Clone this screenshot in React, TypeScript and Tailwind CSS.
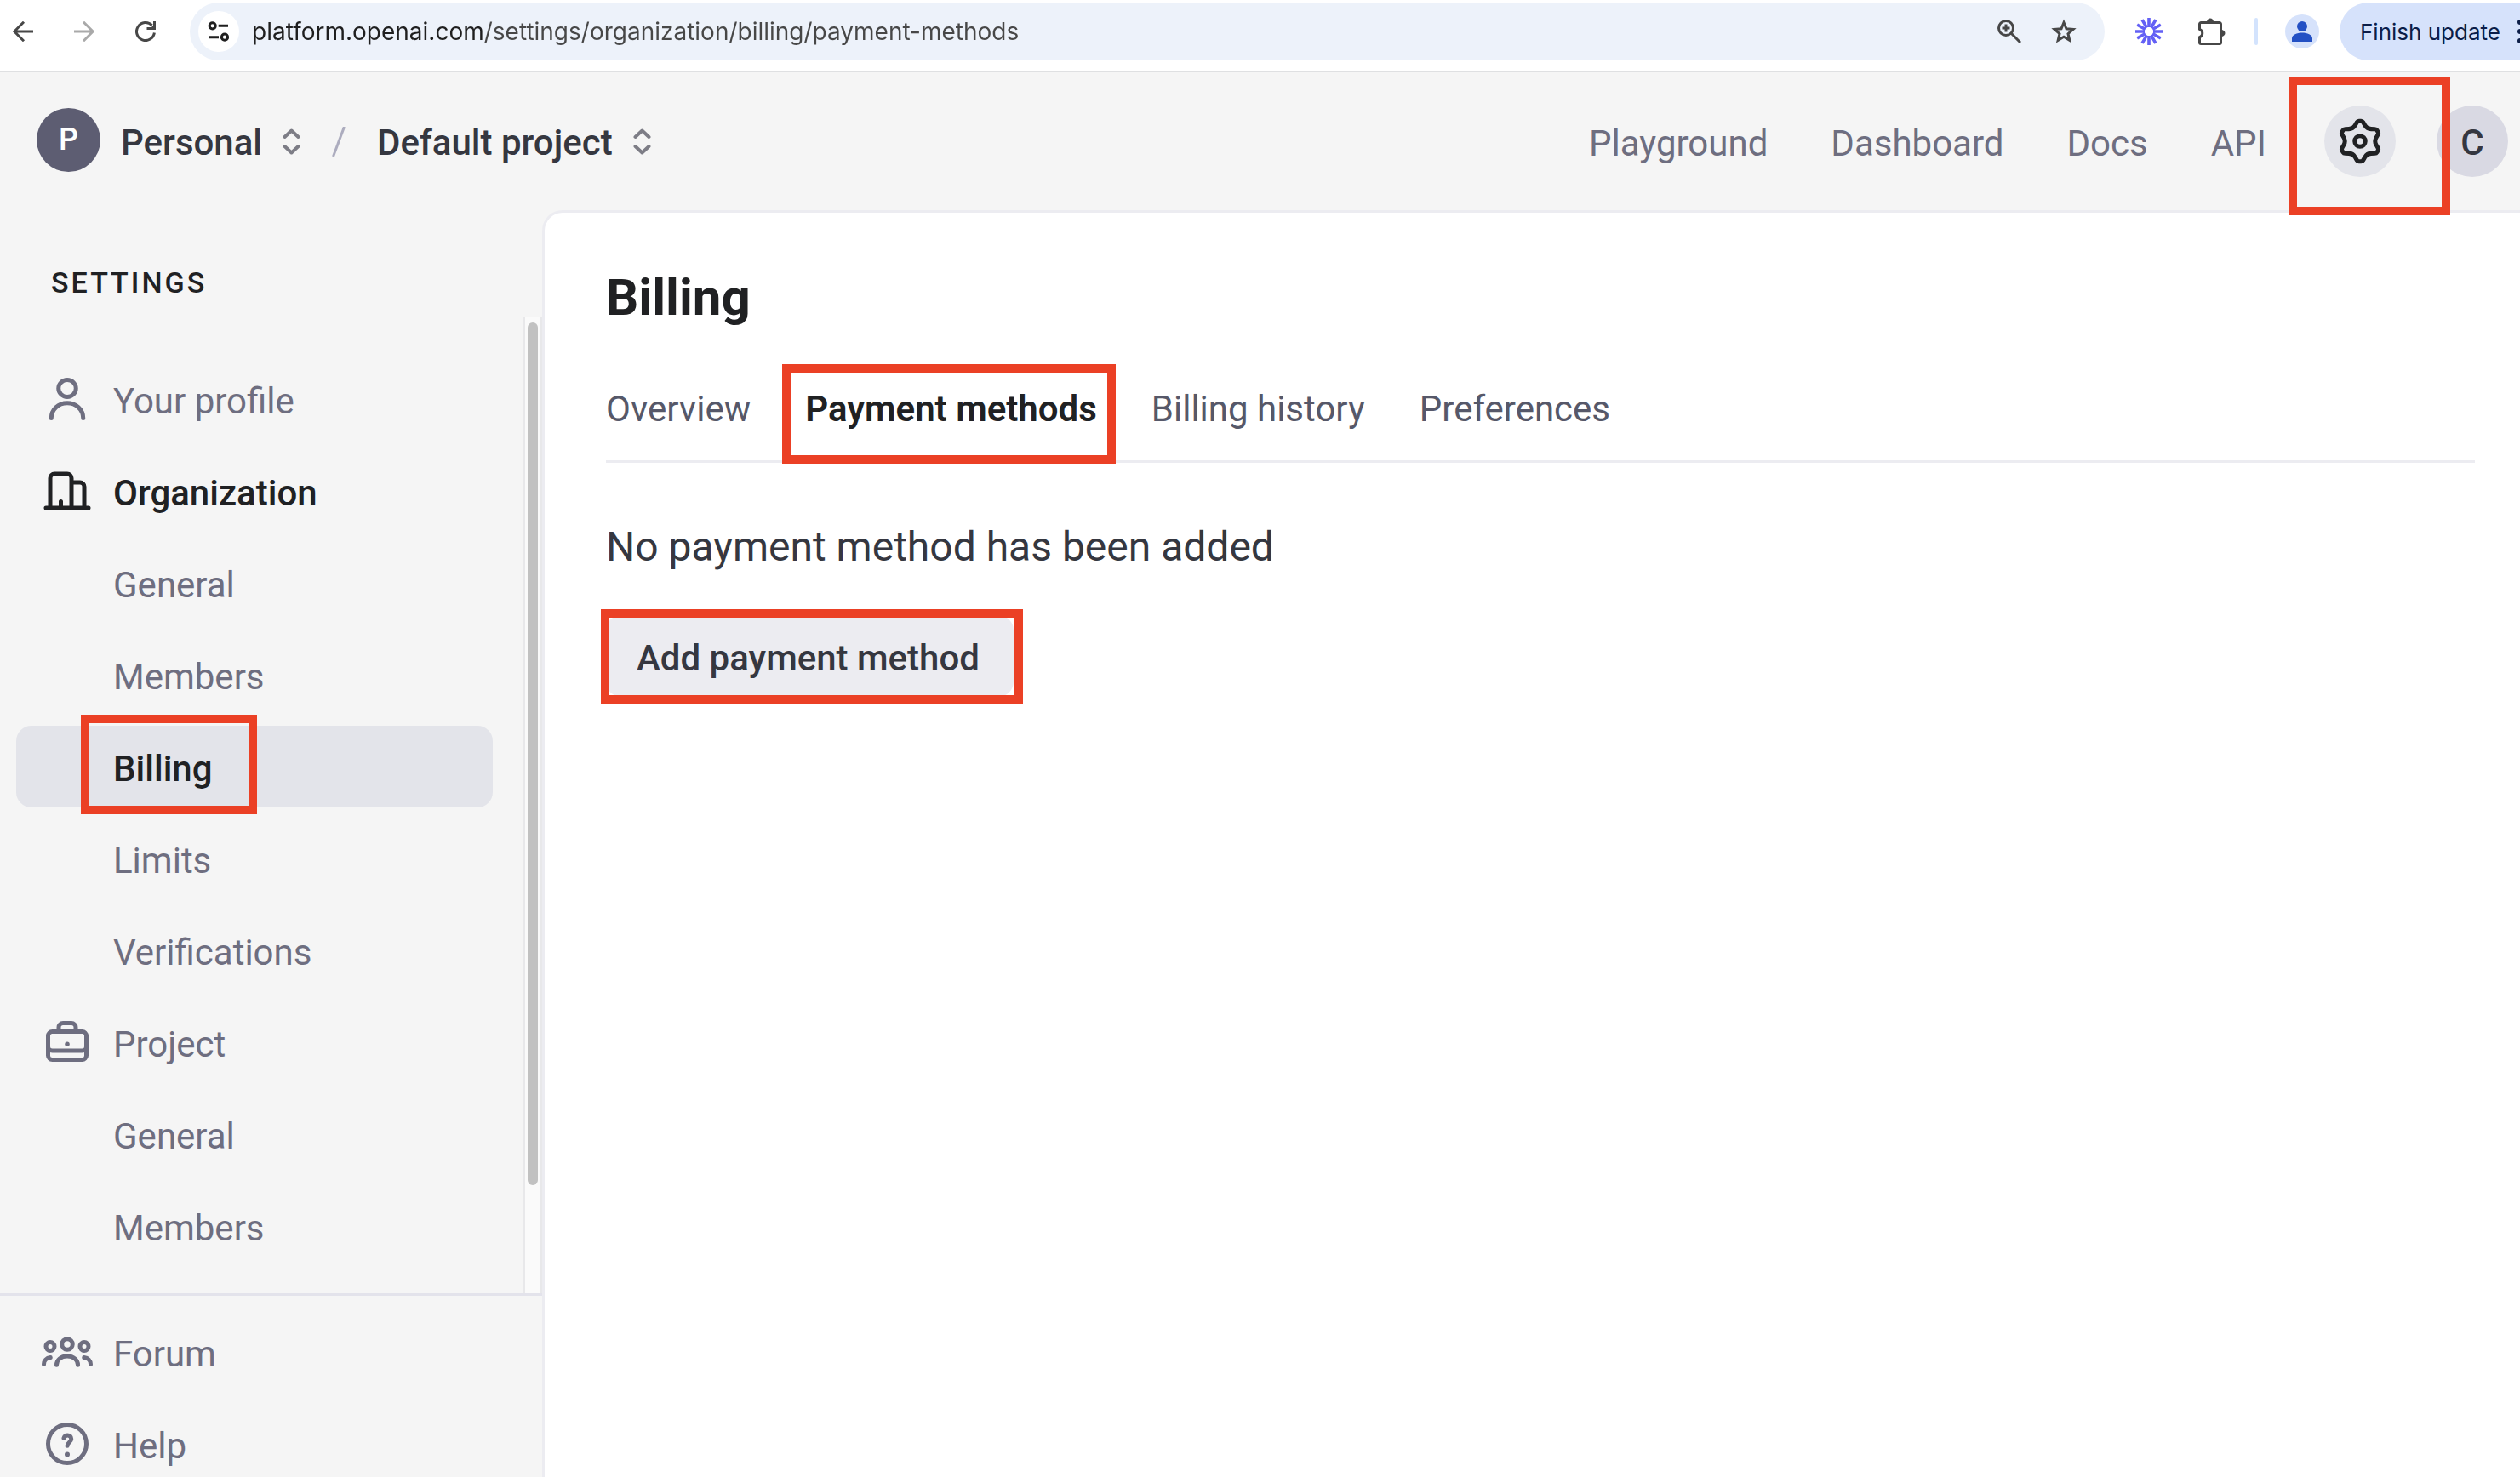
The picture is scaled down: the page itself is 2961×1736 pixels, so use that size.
import type { ReactNode } from 'react';

const RED_BOX = 'pointer-events-none absolute z-10 border-10 border-[#eb4025]';

function BackArrow({ flip = false }: { flip?: boolean }) {
  return (
    <svg viewBox="0 0 24 24" className={flip ? 'size-6 rotate-180' : 'size-6'} fill="none" stroke="currentColor" strokeWidth="3" aria-hidden="true">
      <path d="M24 12H2M13 .8 1.8 12 13 23.2" />
    </svg>
  );
}

function Reload() {
  return (
    <svg viewBox="0 0 24 24" className="size-6" fill="none" stroke="currentColor" strokeWidth="3" aria-hidden="true">
      <path d="M22.4 13.5A10.5 10.5 0 1 1 19.6 4.8" />
      <path d="M22.5 0v8.5h-9" />
      <path d="M23 3v6h-6z" fill="currentColor" stroke="none" />
    </svg>
  );
}

function Tune() {
  return (
    <svg viewBox="0 0 48 48" className="size-12" fill="none" stroke="currentColor" strokeWidth="3" aria-hidden="true">
      <circle cx="16.7" cy="17.3" r="3.6" />
      <path d="M23.7 17.3H35M13 30.7h11" />
      <circle cx="31" cy="30.7" r="3.6" />
    </svg>
  );
}

function Magnifier() {
  return (
    <svg viewBox="0 0 28 28" className="size-7" fill="none" stroke="currentColor" strokeWidth="3" aria-hidden="true">
      <circle cx="10" cy="10" r="8.5" />
      <path d="M16 16l11 11M10 5.5v9M5.5 10h9" />
    </svg>
  );
}

function Star() {
  return (
    <svg viewBox="0 0 30 30" className="size-[30px]" fill="none" stroke="currentColor" strokeWidth="3" strokeMiterlimit="10" aria-hidden="true">
      <path d="M15 4.5l3 7.3 8 .7-6 5.2 1.8 7.6-6.8-4.1-6.8 4.1L10 17.7l-6-5.2 8-.7z" />
    </svg>
  );
}

function Burst() {
  return (
    <svg viewBox="0 0 32 32" className="size-8" stroke="#6360f5" strokeWidth="3.6" aria-hidden="true">
      <path d="M16 0v11M16 21v11M0 16h11M21 16h11M8 2.14l5.5 9.53M18.5 20.33l5.5 9.53M2.14 8l9.53 5.5M20.33 18.5l9.53 5.5M24 2.14l-5.5 9.53M13.5 20.33L8 29.86M29.86 8l-9.53 5.5M11.67 18.5L2.14 24" />
    </svg>
  );
}

function Puzzle() {
  return (
    <svg viewBox="0 0 32 32" className="size-8" fill="none" stroke="currentColor" strokeWidth="3" aria-hidden="true">
      <path d="M3.3 5.5h21.4a1.8 1.8 0 0 1 1.8 1.8v21.4a1.8 1.8 0 0 1-1.8 1.8H3.3a1.8 1.8 0 0 1-1.8-1.8v-6a5 5 0 0 0 0-9.4v-6a1.8 1.8 0 0 1 1.8-1.8z" />
      <path d="M10 5a4 4.5 0 0 1 8 0zM27 14a4.5 4 0 0 1 0 8z" fill="currentColor" stroke="none" />
    </svg>
  );
}

function Updown() {
  return (
    <svg viewBox="0 0 21 31" className="h-[31px] w-[21px]" fill="none" stroke="#7d7d86" strokeWidth="4" strokeLinecap="round" strokeLinejoin="round" aria-hidden="true">
      <path d="M2.5 10l8-7.5 8 7.5M2.5 21l8 7.5 8-7.5" />
    </svg>
  );
}

function Icon({ children }: { children: ReactNode }) {
  return (
    <svg viewBox="0 0 24 24" className="size-15 shrink-0" fill="none" stroke="currentColor" strokeWidth="2" strokeLinecap="round" strokeLinejoin="round" aria-hidden="true">
      {children}
    </svg>
  );
}

const personIcon = (
  <Icon>
    <ellipse cx="12" cy="7" rx="4.1" ry="4" />
    <path d="M4.5 21C4.5 17 7.8 13.9 12 13.9S19.5 17 19.5 21" />
  </Icon>
);

const buildingIcon = (
  <Icon>
    <path d="M2 20h20M4 20V6a2 2 0 0 1 2-2h6a2 2 0 0 1 2 2v14M14 8h4a2 2 0 0 1 2 2v10M9 17v3" />
  </Icon>
);

const briefcaseIcon = (
  <Icon>
    <path d="M8 7V5a2 2 0 0 1 2-2h4a2 2 0 0 1 2 2v2" />
    <rect x="3" y="7" width="18" height="13.2" rx="2" />
    <path d="M3 14a2 2 0 0 0 2 2h14a2 2 0 0 0 2-2" />
    <circle cx="12" cy="12.9" r="1.1" fill="currentColor" stroke="none" />
  </Icon>
);

const forumIcon = (
  <Icon>
    <circle cx="12" cy="8.4" r="2.5" />
    <circle cx="4" cy="9.4" r="2" />
    <circle cx="20" cy="9.4" r="2" />
    <path d="M7 18.1c0-2.4 2.1-4.1 5-4.1s5 1.7 5 4.1M1 17.8c0-1.6 1.2-3 3.1-3.2M23 17.8c0-1.6-1.2-3-3.1-3.2" />
  </Icon>
);

const helpIcon = (
  <Icon>
    <circle cx="12" cy="12" r="9" />
    <path d="M10.4 9.3C10.7 8.4 11.3 8 12.1 8c1 0 1.8.7 1.8 1.7 0 1.5-1.9 1.7-1.9 3.2" />
    <circle cx="12" cy="17" r="1.2" fill="currentColor" stroke="none" />
  </Icon>
);

function NavRow({ label, icon, tone = 'muted', boxed = false }: { label: string; icon?: ReactNode; tone?: 'muted' | 'strong' | 'selected'; boxed?: boolean }) {
  const tones = {
    muted: 'text-[#6e6e80]',
    strong: 'font-medium text-[#202123]',
    selected: 'font-medium text-[#202123] bg-[#e3e4ea]',
  };
  return (
    <li className="relative">
      <a href="#" aria-current={tone === 'selected' ? 'page' : undefined} className={`flex h-24 items-center gap-6 rounded-[18px] pl-[30px] text-[42px] leading-[56px] ${tones[tone]}`}>
        {icon ?? <span className="size-15 shrink-0" />}
        <span className="pt-1.5">{label}</span>
      </a>
      {boxed && <span className={`${RED_BOX} -top-[13px] left-[76px] h-[117px] w-[207px]`} />}
    </li>
  );
}

function BrowserBar() {
  return (
    <div className="flex items-center border-b-2 border-[#dfe0e2] bg-white pt-[3px] pb-3 pl-[15px] font-[Inter,sans-serif] text-[#474747]">
      <button type="button" aria-label="Back"><BackArrow /></button>
      <button type="button" aria-label="Forward" className="ml-12 text-[#a9a9a9]"><BackArrow flip /></button>
      <button type="button" aria-label="Reload" className="ml-12"><Reload /></button>
      <div className="ml-10 flex h-17 flex-1 items-center rounded-full bg-[#edf2fa] pr-[33px] pl-[10px]">
        <button type="button" aria-label="Site information" className="rounded-full bg-white text-[#1f1f1f]"><Tune /></button>
        <input
          aria-label="Address"
          readOnly
          value="platform.openai.com/settings/organization/billing/payment-methods"
          className="ml-[15px] min-w-0 flex-1 bg-[linear-gradient(to_right,#1f1f1f_272px,#474747_272px)] bg-clip-text text-[28px] leading-10 text-transparent outline-none"
        />
        <button type="button" aria-label="Zoom"><Magnifier /></button>
        <button type="button" aria-label="Bookmark" className="ml-[35px]"><Star /></button>
      </div>
      <button type="button" aria-label="Extension" className="ml-9"><Burst /></button>
      <button type="button" aria-label="Extensions" className="ml-[42px]"><Puzzle /></button>
      <span className="ml-[34px] h-8 w-1 rounded-full bg-[#d3e3fd]" />
      <button type="button" aria-label="Profile" className="ml-8 rounded-full bg-[#d6e2fb] text-[#2350c4]">
        <svg viewBox="0 0 40 40" className="size-10" fill="currentColor" aria-hidden="true">
          <circle cx="20" cy="14" r="6" />
          <path d="M8 32v-4c0-4 6-6.5 12-6.5S32 24 32 28v4z" />
        </svg>
      </button>
      <button type="button" className="ml-6 flex h-17 w-[212px] items-center gap-5 overflow-hidden rounded-l-full bg-[#d6e2fb] pl-6 text-[26px] whitespace-nowrap text-[#0b1d48]">
        Finish update
        <svg viewBox="0 0 6 32" className="h-8 w-1.5 shrink-0" fill="currentColor" aria-hidden="true">
          <circle cx="3" cy="5" r="3" />
          <circle cx="3" cy="16" r="3" />
          <circle cx="3" cy="27" r="3" />
        </svg>
      </button>
    </div>
  );
}

function Header() {
  return (
    <header className="flex h-[162px] shrink-0 items-center pr-[14px] pl-[43px]">
      <button type="button" className="flex items-center text-[42px] leading-[56px] font-medium text-[#353740]">
        <span className="-mt-1 flex size-[75px] items-center justify-center rounded-full bg-[#5d5d72] text-[36px] text-white">P</span>
        <span className="ml-6 pt-1">Personal</span>
        <span className="ml-6"><Updown /></span>
      </button>
      <svg viewBox="0 0 16 35" className="mx-[37px] h-[35px] w-4" stroke="#acacbe" strokeWidth="3" aria-hidden="true">
        <path d="M14.5 0L1.5 35" />
      </svg>
      <button type="button" className="flex items-center text-[42px] leading-[56px] font-medium text-[#353740]">
        <span className="pt-1">Default project</span>
        <span className="ml-6"><Updown /></span>
      </button>
      <nav className="ml-auto flex items-center gap-[74px] pt-1.5 text-[42px] leading-[56px] text-[#6e6e80]">
        <a href="#">Playground</a>
        <a href="#">Dashboard</a>
        <a href="#">Docs</a>
        <a href="#">API</a>
      </nav>
      <div className="relative ml-17">
        <button type="button" aria-label="Settings" className="flex size-21 items-center justify-center rounded-full bg-[#e3e4ea] text-[#202123]">
          <svg viewBox="0 0 24 24" className="size-15" fill="none" stroke="currentColor" strokeWidth="1.8" strokeLinejoin="round" aria-hidden="true">
            <path
              transform="translate(12 12) scale(1.118) translate(-12 -12)"
              d="M11.568 3.5a1 1 0 0 0-.863.494l-.811 1.381A3 3 0 0 1 7.33 6.856l-1.596.013a1 1 0 0 0-.858.501l-.439.761a1 1 0 0 0-.004.992l.792 1.4a3 3 0 0 1 0 2.954l-.792 1.4a1 1 0 0 0 .004.992l.439.76a1 1 0 0 0 .858.502l1.596.013a3 3 0 0 1 2.564 1.48l.811 1.382a1 1 0 0 0 .863.494h.87a1 1 0 0 0 .862-.494l.812-1.381a3 3 0 0 1 2.563-1.481l1.596-.013a1 1 0 0 0 .86-.501l.438-.761a1 1 0 0 0 .004-.992l-.793-1.4a3 3 0 0 1 0-2.954l.793-1.4a1 1 0 0 0-.004-.992l-.439-.76a1 1 0 0 0-.859-.502l-1.596-.013a3 3 0 0 1-2.563-1.48L13.3 3.994a1 1 0 0 0-.862-.494z"
            />
            <circle cx="12" cy="12" r="2.5" strokeWidth="2" />
          </svg>
        </button>
        <span className={`${RED_BOX} -top-[34px] -left-[42px] h-[163px] w-[190px]`} />
      </div>
      <button type="button" aria-label="Account" className="ml-12 flex size-21 items-center justify-center rounded-full bg-[#d9d9e3] pt-0.5 text-[42px] font-medium text-[#353740]">C</button>
    </header>
  );
}

function Sidebar() {
  return (
    <aside className="flex min-h-0 w-[637px] shrink-0 flex-col">
      <h2 className="h-[126px] shrink-0 pt-[65px] pl-15 text-[34px] leading-10 font-medium tracking-[3px] text-[#202123]">SETTINGS</h2>
      <div className="flex min-h-0 flex-1">
        <ul className="flex flex-1 flex-col gap-3 overflow-hidden pt-12 pr-9 pl-[19px]">
          <NavRow label="Your profile" icon={personIcon} />
          <NavRow label="Organization" icon={buildingIcon} tone="strong" />
          <NavRow label="General" />
          <NavRow label="Members" />
          <NavRow label="Billing" tone="selected" boxed />
          <NavRow label="Limits" />
          <NavRow label="Verifications" />
          <NavRow label="Project" icon={briefcaseIcon} />
          <NavRow label="General" />
          <NavRow label="Members" />
        </ul>
        <div className="flex w-[22px] flex-col items-center border-x-2 border-[#e8e8ea] bg-[#fafafa] pt-1.5">
          <div className="h-8/9 w-3 rounded-full bg-[#c1c1c1]" />
        </div>
      </div>
      <ul className="flex h-54 shrink-0 flex-col gap-3 border-t-3 border-[#e3e3eb] pt-[18px] pl-[19px]">
        <NavRow label="Forum" icon={forumIcon} />
        <NavRow label="Help" icon={helpIcon} />
      </ul>
    </aside>
  );
}

export default function App() {
  return (
    <div className="flex h-screen flex-col overflow-hidden bg-[#f5f5f5] font-[Roboto,sans-serif]">
      <BrowserBar />
      <Header />
      <div className="flex min-h-0 flex-1">
        <Sidebar />
        <main className="min-w-0 flex-1 rounded-tl-3xl border-t-3 border-l-3 border-[#ececf1] bg-white pt-16 pr-[53px] pl-[72px]">
          <h1 className="text-[60px] leading-[72px] font-bold text-[#202123]">Billing</h1>
          <nav className="mt-[65px] flex gap-16 border-b-3 border-[#ececf1] pb-[30px] text-[42px] leading-[60px] text-[#565869]">
            <a href="#">Overview</a>
            <div className="relative">
              <a href="#" aria-current="page" className="font-semibold text-[#202123]">Payment methods</a>
              <span className={`${RED_BOX} -top-[23px] -left-[27px] h-[117px] w-[392px]`} />
            </div>
            <a href="#">Billing history</a>
            <a href="#">Preferences</a>
          </nav>
          <p className="mt-[67px] text-[48px] leading-16 text-[#353740]">No payment method has been added</p>
          <div className="relative mt-12 w-fit">
            <button type="button" className="flex h-24 items-center rounded-[18px] bg-[#ececf1] pt-1 pr-10 pl-9 text-[42px] font-medium text-[#353740]">Add payment method</button>
            <span className={`${RED_BOX} -top-[7px] -left-[6px] h-[111px] w-[496px]`} />
          </div>
        </main>
      </div>
    </div>
  );
}
